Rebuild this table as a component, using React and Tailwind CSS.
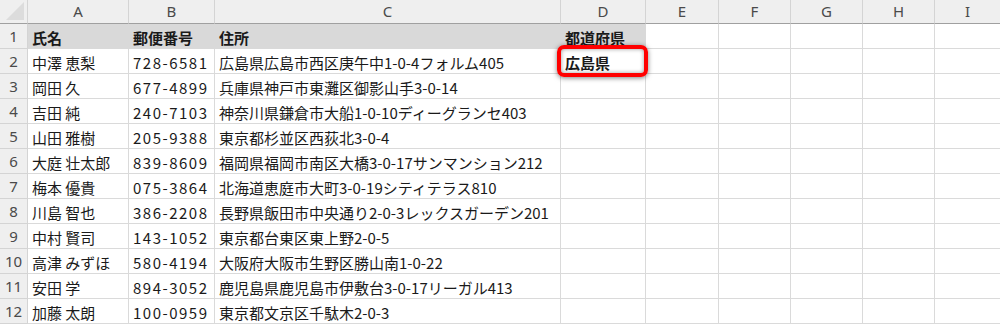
import React from "react";

const cols = ["A", "B", "C", "D", "E", "F", "G", "H", "I"];

const rows = [
  ["中澤 恵梨", "728-6581", "広島県広島市西区庚午中1-0-4フォルム405", "広島県"],
  ["岡田 久", "677-4899", "兵庫県神戸市東灘区御影山手3-0-14", ""],
  ["吉田 純", "240-7103", "神奈川県鎌倉市大船1-0-10ディーグランセ403", ""],
  ["山田 雅樹", "205-9388", "東京都杉並区西荻北3-0-4", ""],
  ["大庭 壮太郎", "839-8609", "福岡県福岡市南区大橋3-0-17サンマンション212", ""],
  ["梅本 優貴", "075-3864", "北海道恵庭市大町3-0-19シティテラス810", ""],
  ["川島 智也", "386-2208", "長野県飯田市中央通り2-0-3レックスガーデン201", ""],
  ["中村 賢司", "143-1052", "東京都台東区東上野2-0-5", ""],
  ["高津 みずほ", "580-4194", "大阪府大阪市生野区勝山南1-0-22", ""],
  ["安田 学", "894-3052", "鹿児島県鹿児島市伊敷台3-0-17リーガル413", ""],
  ["加藤 太朗", "100-0959", "東京都文京区千駄木2-0-3", ""],
];

const font = { fontFamily: '"Noto Sans CJK JP", "Noto Sans", sans-serif' };
const hdrFont = { fontFamily: '"Noto Sans", "Liberation Sans", sans-serif' };

export default function App() {
  return (
    <div className="relative w-[1000px] h-[325px] overflow-hidden bg-white" style={font}>
      <div className="grid grid-cols-[28px_101px_86px_346px_85px_73px_72px_72px_72px_66px] grid-rows-[24px_repeat(12,25px)] text-[15px] leading-none text-[#1a1a1a]">
        {/* corner */}
        <div className="relative bg-[#efefef] border-r border-b border-r-[#d4d4d4] border-b-[#a0a0a0] overflow-hidden">
          <div className="absolute right-[3px] bottom-[3px] w-0 h-0 border-l-[18px] border-l-transparent border-b-[18px] border-b-[#dcdcdc]" />
        </div>
        {cols.map((c) => (
          <div
            key={c}
            className="flex items-center justify-center bg-[#efefef] border-r border-b border-r-[#d4d4d4] border-b-[#a0a0a0] text-[#4a4a4a] text-[15px]"
            style={hdrFont}
          >
            {c}
          </div>
        ))}

        {/* row 1 */}
        <div className="flex items-center justify-center bg-[#efefef] border-r border-b border-[#d4d4d4] text-[#4a4a4a]" style={hdrFont}>1</div>
        <div className="col-span-4 grid grid-cols-[101px_86px_346px_85px] bg-[#d9d9d9] border-b border-[#d9d9d9] font-bold">
          <div className="flex items-center pl-[4px] pt-[2px]">氏名</div>
          <div className="flex items-center pl-[4px] pt-[2px]">郵便番号</div>
          <div className="flex items-center pl-[4px] pt-[2px]">住所</div>
          <div className="flex items-center pl-[4px] pt-[2px]">都道府県</div>
        </div>
        {[0, 1, 2, 3, 4].map((i) => (
          <div key={i} className="border-r border-b border-[#dadada]" />
        ))}

        {rows.map((r, i) => (
          <React.Fragment key={i}>
            <div className="flex items-center justify-center bg-[#efefef] border-r border-b border-[#d4d4d4] text-[#4a4a4a]" style={hdrFont}>
              {i + 2}
            </div>
            {r.map((v, j) => (
              <div
                key={j}
                className={`flex items-center pl-[4px] pt-[2px] whitespace-nowrap border-r border-b border-[#dadada] ${j === 3 ? "font-bold" : ""} ${j === 1 ? "tracking-[1.5px]" : ""}`}
              >
                {v}
              </div>
            ))}
            {[0, 1, 2, 3, 4].map((k) => (
              <div key={k} className="border-r border-b border-[#dadada]" />
            ))}
          </React.Fragment>
        ))}
      </div>

      {/* red highlight */}
      <div className="absolute left-[557px] top-[45px] w-[91px] h-[32px] rounded-[7px] border-[4px] border-[#ff0000] shadow-[0_1px_5px_rgba(0,0,0,0.5),inset_0_0_4px_rgba(0,0,0,0.4)]" />
    </div>
  );
}
